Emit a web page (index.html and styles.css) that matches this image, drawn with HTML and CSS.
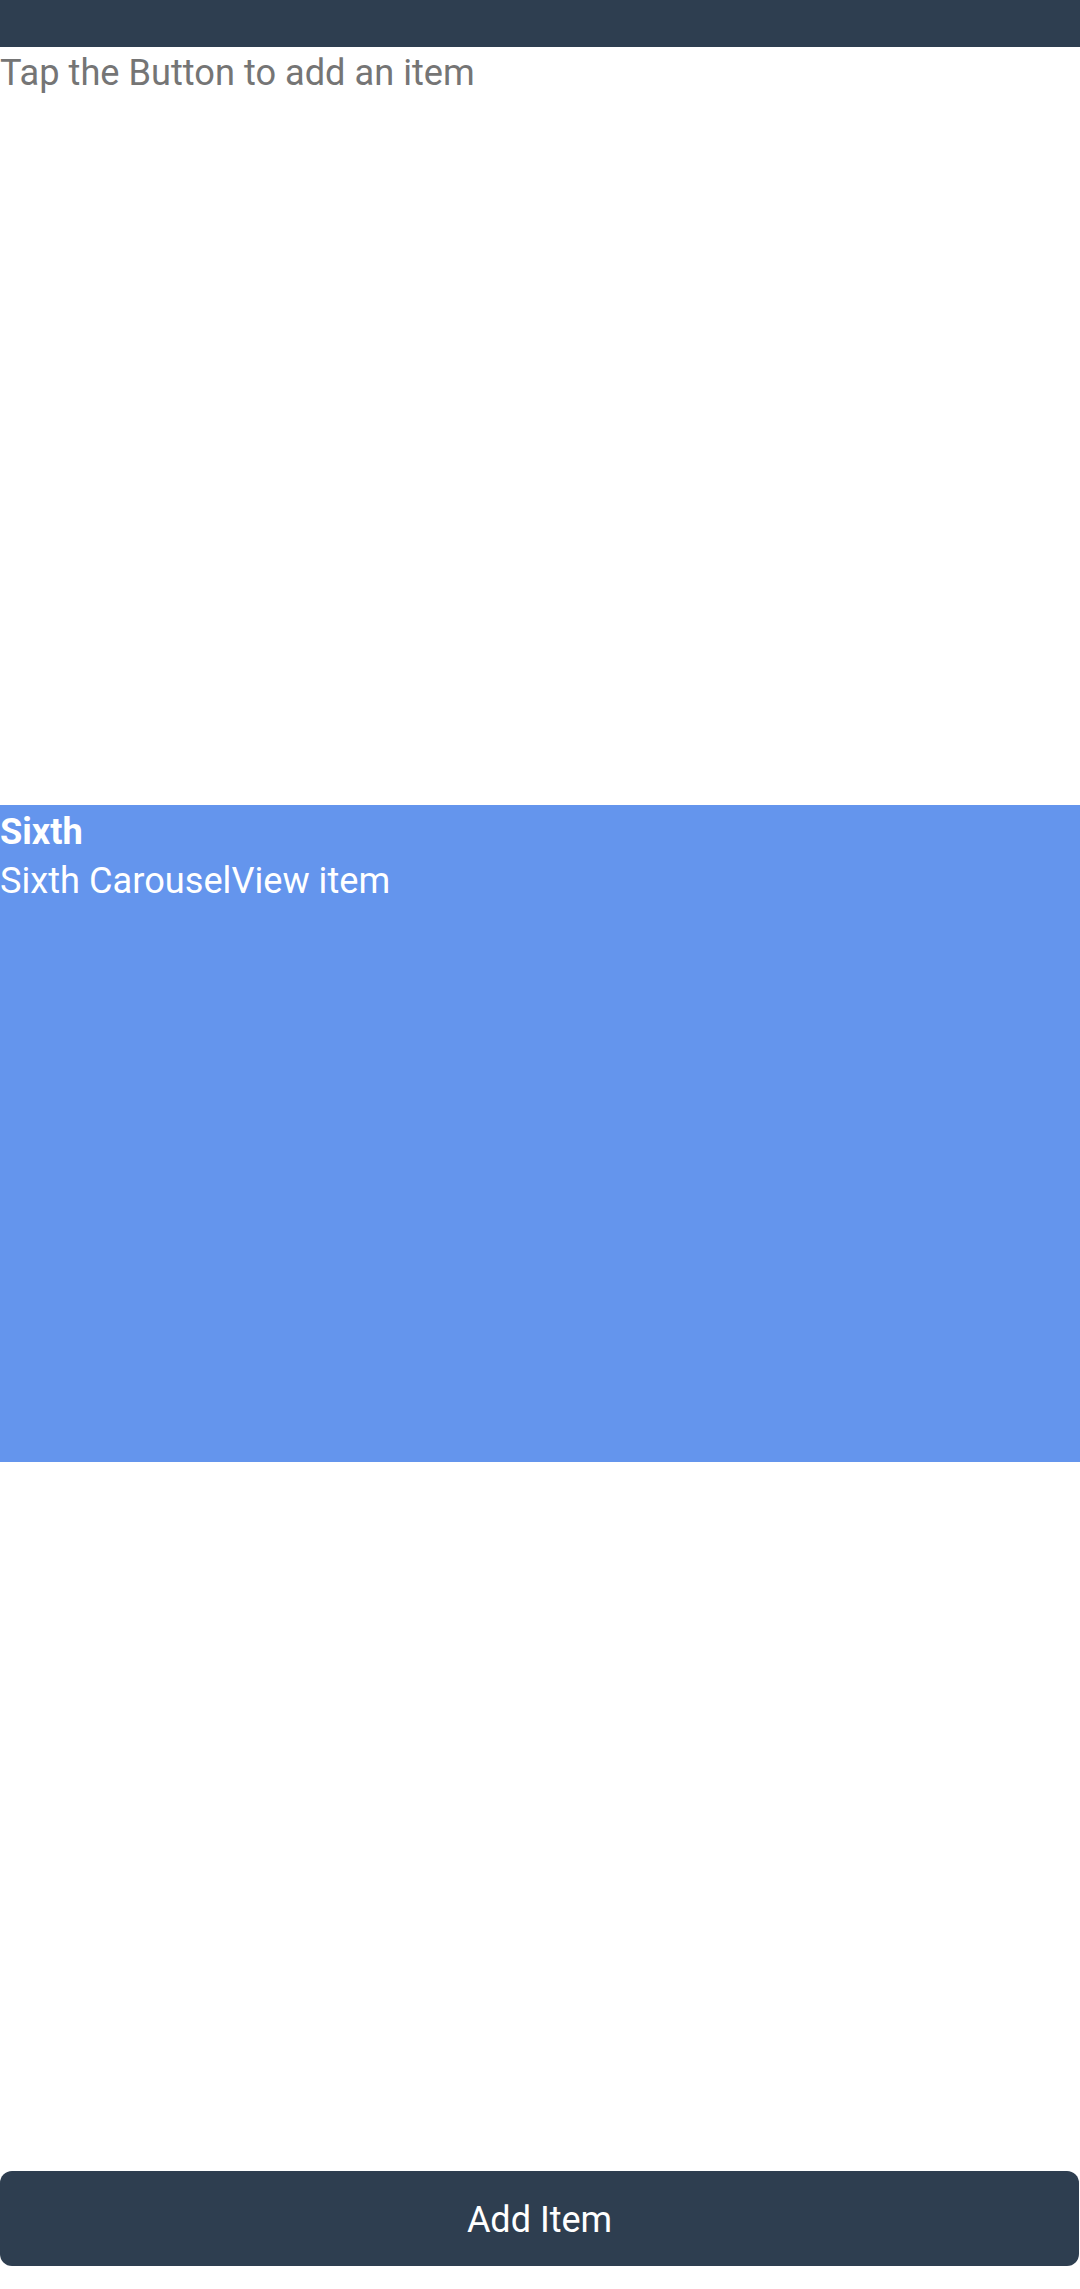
FILE: index.html
```html
<!DOCTYPE html>
<html>
<head>
<meta charset="utf-8">
<link rel="stylesheet" href="styles.css">
</head>
<body>
<div class="app">
  <div class="topbar"></div>
  <div class="hint">Tap the Button to add an item</div>
  <div class="carousel">
    <div class="item">
      <div class="item-title">Sixth</div>
      <div class="item-desc">Sixth CarouselView item</div>
    </div>
  </div>
  <div class="actions">
    <button class="add-btn">Add Item</button>
  </div>
</div>
</body>
</html>
```

FILE: styles.css
```css
html, body {
  margin: 0;
  padding: 0;
  background: #ffffff;
}
.app {
  width: 1080px;
  height: 2289px;
  display: flex;
  flex-direction: column;
  font-family: Roboto, "Noto Sans", sans-serif;
}
.topbar {
  height: 47px;
  background: #2e3e50;
  flex: none;
}
.hint {
  font-size: 36.2px;
  line-height: 49px;
  padding-top: 1px;
  color: #757575;
  flex: none;
}
.carousel {
  flex: 1;
  display: flex;
  flex-direction: column;
  justify-content: center;
  padding-top: 5px;
}
.item {
  height: 657px;
  box-sizing: border-box;
  padding-top: 2px;
  background: #6495ed;
  color: #ffffff;
  font-size: 36.2px;
  line-height: 49px;
}
.item-title {
  font-weight: bold;
}
.actions {
  flex: none;
  padding: 7px 1px 23px 0;
}
.add-btn {
  display: block;
  width: 100%;
  height: 95px;
  border: none;
  border-radius: 12px;
  background: #2e3e50;
  color: #ffffff;
  font-family: Roboto, "Noto Sans", sans-serif;
  font-size: 36px;
  padding: 2px 0 0 0;
}
```
